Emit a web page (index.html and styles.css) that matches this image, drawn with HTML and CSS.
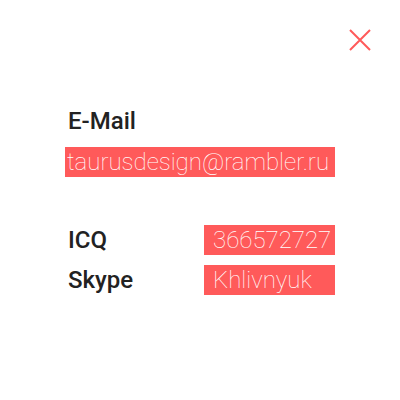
FILE: index.html
```html
<!DOCTYPE html>
<html>
<head>
<meta charset="utf-8">
<link rel="stylesheet" href="styles.css">
</head>
<body>
<div class="modal">
  <div class="header">
    <svg class="close" width="22" height="22" viewBox="0 0 22 22">
      <path d="M1 1 L21 21 M21 1 L1 21" stroke="#ff5a5a" stroke-width="2" fill="none"/>
    </svg>
  </div>
  <div class="label label-top">E-Mail</div>
  <div class="value value-wide">taurusdesign@rambler.ru</div>
  <div class="row row-first">
    <div class="label label-side">ICQ</div>
    <div class="value value-side">366572727</div>
  </div>
  <div class="row">
    <div class="label label-side">Skype</div>
    <div class="value value-side">Khlivnyuk</div>
  </div>
</div>
</body>
</html>
```
FILE: styles.css
```css
html, body {
  margin: 0;
  padding: 0;
  background: #fff;
}
.modal {
  width: 400px;
  height: 400px;
  box-sizing: border-box;
  padding: 29px 29px 0 65px;
  font-family: Roboto, "Liberation Sans", sans-serif;
}
.header {
  display: flex;
  justify-content: flex-end;
  height: 22px;
}
.close {
  display: block;
}
.label {
  font-size: 24px;
  font-weight: 500;
  line-height: 30px;
  color: #222;
  padding-left: 3px;
}
.label-top {
  margin-top: 55px;
}
.value {
  background: #ff5a5a;
  color: #fff;
  font-size: 24px;
  font-weight: 100;
  line-height: 30px;
  height: 30px;
  white-space: nowrap;
  overflow: hidden;
}
.value-wide {
  width: 270px;
  box-sizing: border-box;
  padding-left: 2px;
  margin-top: 11px;
}
.row {
  display: flex;
  width: 270px;
  margin-top: 10px;
}
.row-first {
  margin-top: 48px;
}
.label-side {
  width: 139px;
  box-sizing: border-box;
  flex: none;
}
.value-side {
  flex: 1;
  padding-left: 9px;
}
```
